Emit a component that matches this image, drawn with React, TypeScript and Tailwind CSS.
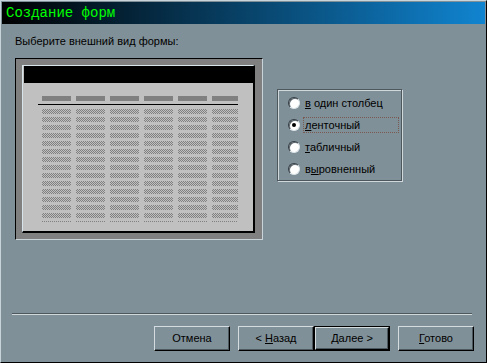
const columns = [0, 1, 2, 3, 4, 5]
const rows = Array.from({ length: 14 }, (_, i) => i)

function Radio({ checked }: { checked?: boolean }) {
  return (
    <span className="relative w-3 h-3 rounded-full bg-white border border-t-[#303840] border-l-[#303840] border-r-[#dce4e8] border-b-[#dce4e8] shadow-[inset_1px_1px_0_#5a666c] flex items-center justify-center shrink-0">
      {checked && <span className="w-1 h-1 rounded-full bg-black" />}
    </span>
  )
}

function Option({ label, checked }: { label: React.ReactNode; checked?: boolean }) {
  return (
    <div className="h-[22px] flex items-center pl-[10px]">
      <Radio checked={checked} />
      <span
        className={`ml-[3px] h-[16px] leading-[14px] block pl-px ${
          checked ? 'w-[96px] border border-dotted border-[#7a5a50]' : 'border border-transparent'
        }`}
      >
        <span>{label}</span>
      </span>
    </div>
  )
}

function Button({ children, primary }: { children: React.ReactNode; primary?: boolean }) {
  return (
    <button
      className={`w-[76px] h-[25px] text-[11px] text-black flex ${primary ? 'border border-black' : ''}`}
    >
      <span className="w-full h-full flex items-center justify-center border border-t-[#d4dce0] border-l-[#d4dce0] border-r-black border-b-black shadow-[inset_-1px_-1px_0_#4c585e]">
        <span className="whitespace-pre">{children}</span>
      </span>
    </button>
  )
}

function FormPreview() {
  return (
    <div className="w-[248px] h-[182px] bg-[#808080] border border-t-black border-l-black border-r-[#c8d4da] border-b-[#c8d4da] pt-[6px] pl-[6px] pr-[7px] pb-[6px] flex">
      <div className="flex-1 bg-[#c0c0c0] border-t border-l border-[#d8e4ea] border-r-2 border-b-2 border-r-black border-b-black flex flex-col">
        <div className="h-[17px] bg-black ml-px" />
        <div className="ml-[15px] mt-[13px] w-[200px]">
          <div className="w-[196px] ml-[4px] overflow-hidden flex gap-[5px]">
            {columns.map((c) => (
              <div key={c} className="w-[29px] h-[5px] bg-[#808080] shrink-0" />
            ))}
          </div>
          <div className="h-px bg-black mt-[3px]" />
          <div className="w-[196px] ml-[4px] mt-[4px] overflow-hidden flex flex-col gap-[3px]">
            {rows.map((r) => (
              <div key={r} className="flex gap-[5px]">
                {columns.map((c) => (
                  <div
                    key={c}
                    className="w-[29px] h-[5px] shrink-0 bg-[repeating-conic-gradient(#808080_0%_25%,#c0c0c0_0%_50%)] bg-size-[2px_2px]"
                  />
                ))}
              </div>
            ))}
            <div className="flex gap-[5px]">
              {columns.map((c) => (
                <div
                  key={c}
                  className="w-[29px] h-px shrink-0 bg-[repeating-linear-gradient(90deg,#808080_0px_1px,#c0c0c0_1px_2px)]"
                />
              ))}
            </div>
          </div>
        </div>
      </div>
    </div>
  )
}

export default function App() {
  return (
    <div
      className="w-[487px] h-[363px] bg-[#809098] border-t border-l border-[#c8d4da] border-r border-b border-r-black border-b-black p-px flex flex-col text-black"
      style={{ fontFamily: '"Liberation Sans", Arial, sans-serif' }}
    >
      <div className="h-[22px] bg-[linear-gradient(90deg,#000000,#1084d0)] flex items-center pl-[4px]">
        <span className="text-[14px] text-[#00ff00] leading-none font-['Liberation_Mono',monospace]">
          Создание форм
        </span>
      </div>

      <div className="flex-1 flex flex-col">
        <div className="pl-[13px] pt-[11px] text-[11px] leading-[13px]">Выберите внешний вид формы:</div>

        <div className="flex pl-[13px] mt-[10px]">
          <FormPreview />
          <div className="ml-[14px] mt-[31px] w-[125px] h-[92px] border border-[#4c585e] shadow-[inset_1px_1px_0_#d0d8dc,1px_1px_0_#d0d8dc] pt-[2px] text-[11px]">
            <Option label={<><span className="underline">в</span> один столбец</>} />
            <Option checked label={<><span className="underline">л</span>енточный</>} />
            <Option label={<><span className="underline">т</span>абличный</>} />
            <Option label={<>в<span className="underline">ы</span>ровненный</>} />
          </div>
        </div>

        <div className="mt-auto ml-[10px] w-[460px] h-px bg-[#4c585e] shadow-[0_1px_0_#d0d8dc]" />

        <div className="flex justify-end pr-[11px] pt-[12px] pb-[10px]">
          <Button>Отмена</Button>
          <div className="ml-[8px] flex">
            <Button>
              &lt; <span className="underline">Н</span>азад
            </Button>
            <Button primary>
              <span className="underline">Д</span>алее &gt;
            </Button>
          </div>
          <div className="ml-[8px]">
            <Button>
              <span className="underline">Г</span>отово
            </Button>
          </div>
        </div>
      </div>
    </div>
  )
}
